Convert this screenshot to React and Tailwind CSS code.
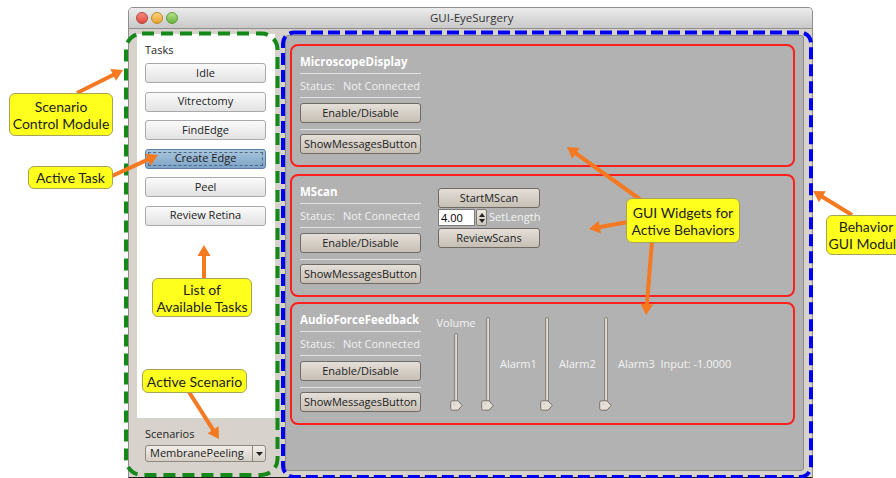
import React from "react";

const ORANGE = "#f47920";

function Arrow({ x1, y1, x2, y2, head = 11, hw = 6.5, w = 4 }) {
  const dx = x2 - x1;
  const dy = y2 - y1;
  const len = Math.hypot(dx, dy);
  const ux = dx / len;
  const uy = dy / len;
  const bx = x2 - ux * head;
  const by = y2 - uy * head;
  const px = -uy;
  const py = ux;
  const pts = `${x2},${y2} ${bx + px * hw},${by + py * hw} ${bx - px * hw},${by - py * hw}`;
  return (
    <g>
      <line x1={x1} y1={y1} x2={bx + ux} y2={by + uy} stroke={ORANGE} strokeWidth={w} />
      <polygon points={pts} fill={ORANGE} />
    </g>
  );
}

function TaskButton({ label, active }) {
  if (active) {
    return (
      <div className="relative h-[20px] w-[121px] rounded-[3px] border border-[#5b7fa4] bg-gradient-to-b from-[#a9c5dd] to-[#7da3c6] flex items-center justify-center text-[11px] text-[#1b1b1b]">
        <span className="absolute inset-[2px] border border-dashed border-[#4d6884]" />
        {label}
      </div>
    );
  }
  return (
    <div className="h-[20px] w-[121px] rounded-[3px] border border-[#a9a9a9] bg-gradient-to-b from-[#fbfbfb] to-[#e2e2e2] flex items-center justify-center text-[11px] text-[#222]">
      {label}
    </div>
  );
}

function WidgetButton({ label, w = "w-[121px]", h = "h-[20px]" }) {
  return (
    <div
      className={`${w} ${h} rounded-[3px] border border-[#6f6a63] bg-gradient-to-b from-[#e4dfd8] to-[#c6bfb5] flex items-center justify-center text-[11px] text-[#1c1c1c] whitespace-nowrap`}
    >
      {label}
    </div>
  );
}

function Sep() {
  return <div className="h-px w-[121px] bg-[#e2e2e2]" />;
}

function ControlColumn({ title }) {
  return (
    <div className="flex flex-col w-[121px]">
      <div className="h-[16px] leading-[16px] text-[11.5px] font-bold text-white whitespace-nowrap">{title}</div>
      <div className="mt-[3px]">
        <Sep />
      </div>
      <div className="mt-[4px] h-[16px] leading-[16px] text-[11px] text-[#f1f1f1] whitespace-nowrap flex">
        <span>Status:</span>
        <span className="ml-[8px]">Not Connected</span>
      </div>
      <div className="mt-[3px]">
        <Sep />
      </div>
      <div className="mt-[5px]">
        <WidgetButton label="Enable/Disable" />
      </div>
      <div className="mt-[6px]">
        <Sep />
      </div>
      <div className="mt-[4px]">
        <WidgetButton label="ShowMessagesButton" />
      </div>
    </div>
  );
}

function Thumb() {
  return (
    <svg width="13" height="11" viewBox="0 0 13 11" className="-mt-[5px] block">
      <path
        d="M2.5 0.8 H8 L12.2 5.5 L8 10.2 H2.5 Q0.7 10.2 0.7 8.4 V2.6 Q0.7 0.8 2.5 0.8 Z"
        fill="#e5dfd7"
        stroke="#77726b"
        strokeWidth="1"
      />
      <path d="M3.5 4 L4.5 4" stroke="#9a948c" strokeWidth="0.8" />
    </svg>
  );
}

function Slider({ trackH }) {
  return (
    <div className="flex flex-col items-center w-[13px]">
      <div
        className="w-[4px] rounded-full border border-[#8a857e] bg-gradient-to-r from-[#cfc9c1] to-[#e4dfd8]"
        style={{ height: trackH }}
      />
      <Thumb />
    </div>
  );
}

function RedPanel({ children, className = "" }) {
  return (
    <div className={`h-[123px] w-[505px] rounded-[8px] border-2 border-[#ff1f1f] pt-[8px] pl-[8px] flex items-start ${className}`}>
      {children}
    </div>
  );
}

function Note({ className, children }) {
  return (
    <div
      className={`absolute rounded-[6px] border border-[#a8a35a] bg-[#ffff1e] flex flex-col items-center justify-center text-[14px] leading-[17px] text-[#222] font-['Lato',sans-serif] whitespace-nowrap ${className}`}
    >
      {children}
    </div>
  );
}

export default function App() {
  const tasks = ["Idle", "Vitrectomy", "FindEdge", "Create Edge", "Peel", "Review Retina"];
  return (
    <div className="relative w-[896px] h-[478px] overflow-hidden bg-white font-['Open_Sans',sans-serif]">
      {/* application window */}
      <div className="ml-[128px] mt-[7px] w-[685px] h-[471px] flex flex-col border border-[#8f8f8f] border-b-[#1e1e1e] rounded-t-[5px] overflow-hidden">
        {/* title bar */}
        <div className="h-[21px] shrink-0 flex items-center border-b border-[#8e8e8e] bg-gradient-to-b from-[#ececec] to-[#c9c9c9] pl-[7px]">
          <div className="flex gap-[3px]">
            <span className="w-[12px] h-[12px] rounded-full border border-[#b4433d] bg-gradient-to-b from-[#f88a80] to-[#e0463c]" />
            <span className="w-[12px] h-[12px] rounded-full border border-[#b88a2a] bg-gradient-to-b from-[#fbd37a] to-[#e6a224]" />
            <span className="w-[12px] h-[12px] rounded-full border border-[#5f9a3a] bg-gradient-to-b from-[#b6e48a] to-[#64b33c]" />
          </div>
          <div className="ml-[252px] text-[11.5px] text-[#333]">GUI-EyeSurgery</div>
        </div>

        {/* window body */}
        <div className="flex-1 flex bg-[#d7d2cb]">
          {/* scenario / task column */}
          <div className="pl-[8px] pt-[5px] flex flex-col">
            <div className="w-[138px] h-[384px] bg-white pt-[9px] pl-[8px] flex flex-col">
              <div className="h-[14px] leading-[14px] text-[11px] text-[#222]">Tasks</div>
              <div className="mt-[6px] flex flex-col gap-[8.5px]">
                {tasks.map((t) => (
                  <TaskButton key={t} label={t} active={t === "Create Edge"} />
                ))}
              </div>
            </div>
            <div className="pl-[8px] mt-[9px] h-[14px] leading-[14px] text-[11px] text-[#222]">Scenarios</div>
            <div className="ml-[8px] mt-[4px] w-[121px] h-[17px] rounded-[3px] border border-[#8c877f] bg-gradient-to-b from-[#f1ede8] to-[#d5cfc7] flex items-center text-[11px] text-[#1c1c1c]">
              <span className="flex-1 pl-[4px]">MembranePeeling</span>
              <span className="w-[13px] h-full border-l border-[#8c877f] flex items-center justify-center">
                <svg width="7" height="4" viewBox="0 0 7 4">
                  <path d="M0 0 H7 L3.5 4 Z" fill="#222" />
                </svg>
              </span>
            </div>
          </div>

          {/* behavior widgets area */}
          <div className="ml-[10px] mt-[6px] w-[519px] h-[436px] rounded-[3px] border border-[#8d8d8d] bg-[#b2b2b2] pl-[4px] pt-[8px] flex flex-col">
            <RedPanel>
              <ControlColumn title="MicroscopeDisplay" />
            </RedPanel>

            <RedPanel className="mt-[7px]">
              <ControlColumn title="MScan" />
              <div className="ml-[17px] mt-[4px] flex flex-col">
                <WidgetButton label="StartMScan" w="w-[102px]" />
                <div className="mt-[1px] h-[17px] flex items-center">
                  <div className="w-[37px] h-[17px] bg-white border border-[#7a7a7a] pl-[2px] text-[11px] leading-[15px] text-black">4.00</div>
                  <div className="ml-[1px] w-[11px] h-[17px] rounded-[2px] border border-[#7f7a73] bg-gradient-to-b from-[#ece7e0] to-[#cdc6bc] flex flex-col items-center justify-center gap-[2px]">
                    <svg width="6" height="4" viewBox="0 0 6 4">
                      <path d="M3 0 L6 4 H0 Z" fill="#222" />
                    </svg>
                    <svg width="6" height="4" viewBox="0 0 6 4">
                      <path d="M0 0 H6 L3 4 Z" fill="#222" />
                    </svg>
                  </div>
                  <span className="ml-[2px] text-[11px] text-[#f1f1f1]">SetLength</span>
                </div>
                <div className="mt-[2px]">
                  <WidgetButton label="ReviewScans" w="w-[102px]" />
                </div>
              </div>
            </RedPanel>

            <RedPanel className="mt-[5px]">
              <ControlColumn title="AudioForceFeedback" />
              <div className="ml-[16px] mt-[3px] flex items-start text-[11px] text-[#f3f3f3]">
                <div className="w-[38px] flex flex-col items-center">
                  <div className="h-[16px] leading-[16px]">Volume</div>
                  <div className="mt-[2px]">
                    <Slider trackH={72} />
                  </div>
                </div>
                <div className="ml-[6px] mt-[2px]">
                  <Slider trackH={88} />
                </div>
                <div className="w-[46px] pl-[6px] mt-[41px] h-[16px] leading-[16px]">Alarm1</div>
                <div className="mt-[2px]">
                  <Slider trackH={88} />
                </div>
                <div className="w-[46px] pl-[6px] mt-[41px] h-[16px] leading-[16px]">Alarm2</div>
                <div className="mt-[2px]">
                  <Slider trackH={88} />
                </div>
                <div className="pl-[6px] mt-[41px] h-[16px] leading-[16px] whitespace-nowrap">
                  Alarm3&nbsp;&nbsp;Input: -1.0000
                </div>
              </div>
            </RedPanel>
          </div>
        </div>
      </div>

      {/* module outlines and arrows */}
      <svg className="absolute left-0 top-0 pointer-events-none" width="896" height="478" viewBox="0 0 896 478">
        <rect x="126" y="33.5" width="151.5" height="441.5" rx="16" fill="none" stroke="#14891a" strokeWidth="4" strokeDasharray="12 7" />
        <rect x="283" y="32.5" width="528" height="444.5" rx="11" fill="none" stroke="#0000f0" strokeWidth="4" strokeDasharray="12 5" />
        <Arrow x1={77} y1={93} x2={123} y2={70} />
        <Arrow x1={112} y1={176} x2={158} y2={155} />
        <Arrow x1={204} y1={279} x2={204} y2={245} />
        <Arrow x1={189} y1={392} x2={219} y2={439} />
        <Arrow x1={641} y1={200} x2={567} y2={147} />
        <Arrow x1={628} y1={222} x2={589} y2={229} />
        <Arrow x1={652} y1={242} x2={646} y2={315} />
        <Arrow x1={852} y1={215} x2={813} y2={191} />
      </svg>

      <Note className="left-[9px] top-[93px] w-[104px] h-[43px]">
        <span>Scenario</span>
        <span>Control Module</span>
      </Note>
      <Note className="left-[28px] top-[166px] w-[85px] h-[23px]">
        <span>Active Task</span>
      </Note>
      <Note className="left-[152px] top-[278px] w-[100px] h-[39px]">
        <span>List of</span>
        <span>Available Tasks</span>
      </Note>
      <Note className="left-[142px] top-[369px] w-[105px] h-[24px]">
        <span>Active Scenario</span>
      </Note>
      <Note className="left-[626px] top-[198px] w-[114px] h-[45px]">
        <span>GUI Widgets for</span>
        <span>Active Behaviors</span>
      </Note>
      <Note className="left-[826px] top-[215px] w-[80px] h-[40px]">
        <span>Behavior</span>
        <span>GUI Module</span>
      </Note>
    </div>
  );
}
